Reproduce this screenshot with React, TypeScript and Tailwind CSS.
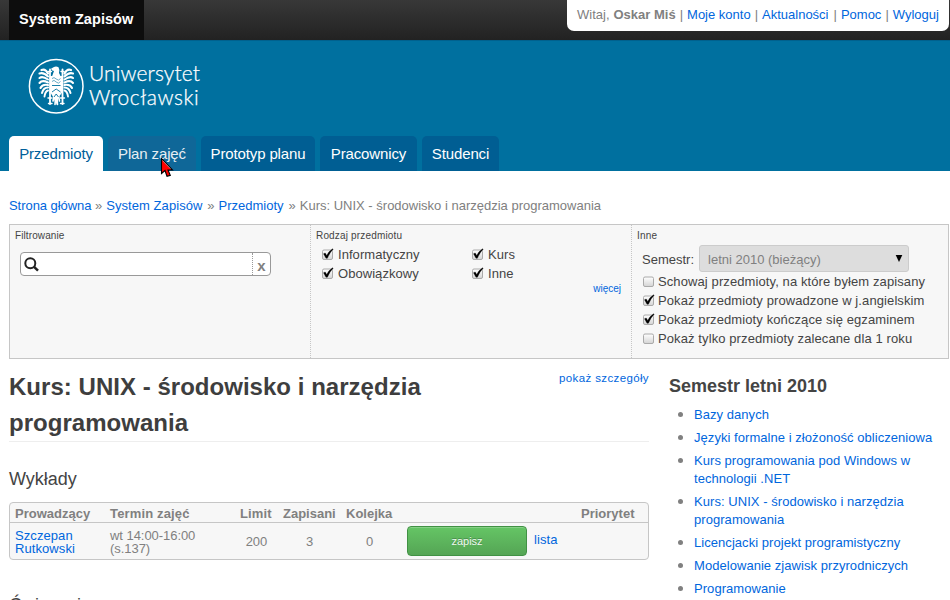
import React from "react";

const link = "text-[#0066dd]";

function Emblem() {
  const wing = (
    <g fill="none" stroke="#fff" strokeLinecap="round">
      <path d="M20 15.500 C18.500 12.500 16 11 13.500 12" strokeWidth="2.200" />
      <path d="M20 18.500 C17 15.500 14 14.500 11.500 15.500" strokeWidth="2.100" />
      <path d="M20 21.500 C17 19.500 13.500 18.500 11.500 20" strokeWidth="2.100" />
      <path d="M20 24.500 C17 23 13.500 22.500 11.500 25" strokeWidth="2.100" />
      <path d="M20 27 C17 26.500 14 26.500 12.500 30" strokeWidth="2.100" />
      <path d="M20 29.500 C17.500 29.500 15 31 14 35" strokeWidth="2" />
      <path d="M20 32.500 C18.500 33 17 34.500 16.500 38.500" strokeWidth="1.900" />
      <path d="M22 11.500 V46" strokeWidth="1.800" />
      <path d="M20.500 13.500 H23.500 M20 40 H24 M20.500 45.500 H24" strokeWidth="1.400" />
      <path d="M26 38 L25 43 M27.500 39 L27 46.500" strokeWidth="1.600" />
    </g>
  );
  return (
    <svg width="56" height="56" viewBox="0 0 56 56" className="shrink-0">
      <circle cx="28.200" cy="28.200" r="26.800" fill="none" stroke="#fff" strokeWidth="1.500" />
      {wing}
      <g transform="translate(56.500 0) scale(-1 1)">{wing}</g>
      <path d="M24.300 12.500 L23 10.800 L25.500 9.300 Q28 7.500 30.500 9.300 Q32 12 31 15 L32.500 18 H24.200 L26 13 Z" fill="#fff" />
      <path d="M22 18 H34.500 V34 L31.500 38 L30 42 L28.200 47 L26.500 42 L24.500 38 L22 34 Z" fill="#fff" />
      <path d="M24 20.500 Q26 18.500 28.200 21 Q30.500 23.500 32.500 20.500 M24 23.500 Q26 21 28.200 24 Q30.500 26.500 32.500 23.500" fill="none" stroke="#00709f" strokeWidth=".6" />
      <path d="M24 27.500 H32.500 M24 34 L28.200 31 L32.500 34 M26 39 L28.200 36 L30.500 39" fill="none" stroke="#00709f" strokeWidth=".9" />
    </svg>
  );
}

function Check({ on = false }: { on?: boolean }) {
  return (
    <svg width="13" height="13" viewBox="0 0 13 13" className="shrink-0">
      <defs>
        <linearGradient id="box" x1="0" y1="0" x2="0" y2="1">
          <stop offset="0" stopColor="#fff" />
          <stop offset="1" stopColor="#d4d4d4" />
        </linearGradient>
      </defs>
      <rect x="1.500" y="2" width="10" height="9.500" rx="1.500" fill="url(#box)" stroke="#aaa" />
      {on && <path d="M2.500 5.800 L4.200 5 L5.700 7.500 Q7.500 3.500 11.500 .8 L12.200 1.300 Q8.700 4.700 6.400 10.200 L5 10.200 Z" fill="#000" stroke="#000" strokeWidth=".3" />}
    </svg>
  );
}

const tabs = [
  { name: "Przedmioty", style: "w-[94px] bg-white text-[#00609a]" },
  { name: "Plan zajęć", style: "w-[88px] bg-[#0f6798] text-[#e7eef3]" },
  { name: "Prototyp planu", style: "w-[114px] bg-[#005e93] text-white" },
  { name: "Pracownicy", style: "w-[97px] bg-[#005e93] text-white" },
  { name: "Studenci", style: "w-[77px] bg-[#005e93] text-white" },
];

const courses = [
  ["Bazy danych"],
  ["Języki formalne i złożoność obliczeniowa"],
  ["Kurs programowania pod Windows w", "technologii .NET"],
  ["Kurs: UNIX - środowisko i narzędzia", "programowania"],
  ["Licencjacki projekt programistyczny"],
  ["Modelowanie zjawisk przyrodniczych"],
  ["Programowanie"],
];

const options = [
  { label: "Schowaj przedmioty, na które byłem zapisany", on: false },
  { label: "Pokaż przedmioty prowadzone w j.angielskim", on: true },
  { label: "Pokaż przedmioty kończące się egzaminem", on: true },
  { label: "Pokaż tylko przedmioty zalecane dla 1 roku", on: false },
];

export default function App() {
  return (
    <div className="relative h-[600px] w-[950px] overflow-hidden whitespace-nowrap bg-white font-['Liberation_Sans',Arial,sans-serif] text-[13px] leading-[18px] text-[#808080]">
      <div className="flex h-10 items-start justify-between bg-linear-to-b from-[#383838] to-[#222] pl-[9px] pr-px">
        <div className="h-10 w-[135px] bg-[#0d0d0d] pl-[10px] text-[14.5px] font-bold leading-[38px] tracking-[0.05px] text-white">System Zapisów</div>
        <div className="flex h-[31px] w-[382px] gap-1 rounded-b-[7px] bg-white pl-[10px] leading-[30px]">
          <span>Witaj,</span><b>Oskar Miś</b><span>|</span>
          <a className={link}>Moje konto</a><span>|</span>
          <a className={link}>Aktualności</a><span className="ml-px">|</span>
          <a className={link}>Pomoc</a><span>|</span>
          <a className={link}>Wyloguj</a>
        </div>
      </div>

      <header className="flex h-[131px] flex-col justify-between border-t border-[#00618e] bg-[#00709f] pl-[9px]">
        <div className="flex pl-[19px] pt-[17px]">
          <Emblem />
          <div className="pl-[5px] pt-[3px] font-[Lato] text-[21px] font-light leading-6 text-white [-webkit-text-stroke:0.25px_white]">
            <div className="tracking-[0.1px]">Uniwersytet</div>
            <div className="tracking-[0.55px]">Wrocławski</div>
          </div>
        </div>
        <nav className="flex gap-[5px]">
          {tabs.map((t) => (
            <a key={t.name} className={"h-[35px] rounded-t-[5px] text-center text-[15px] leading-[36px] tracking-[-0.13px] " + t.style}>{t.name}</a>
          ))}
        </nav>
      </header>

      <div className="flex h-[53px] gap-1 pl-[9px] pt-[26px]">
        <a className={"w-[82px] tracking-[-0.05px] " + link}>Strona główna</a><span>»</span>
        <a className={"w-[97px] tracking-[0.06px] " + link}>System Zapisów</a><span>»</span>
        <a className={link}>Przedmioty</a><span className="ml-px">»</span>
        <span>Kurs: UNIX - środowisko i narzędzia programowania</span>
      </div>

      <section className="ml-[9px] flex h-[135px] w-[940px] border border-[#c6c6c6] bg-[#f7f7f7] text-[#444]">
        <div className="w-[301px] border-r border-dotted border-[#c6c6c6] pl-[5px] pt-[5px]">
          <div className="text-[10px] leading-3 tracking-[0.1px]">Filtrowanie</div>
          <div className="ml-[5px] mt-[10px] flex h-6 w-[251px] rounded-[4px] border border-[#999] bg-white">
            <svg width="22" height="22" viewBox="0 0 22 22">
              <circle cx="9.300" cy="10.200" r="5" fill="none" stroke="#222" strokeWidth="2" />
              <path d="M12.800 13.700 L17 17.700" stroke="#222" strokeWidth="2.500" />
            </svg>
            <div className="ml-[209px] h-[22px] w-[18px] border-l border-dotted border-[#999] text-center text-[15px] font-bold leading-[26px] text-[#808080]">x</div>
          </div>
        </div>
        <div className="w-[321px] border-r border-dotted border-[#c6c6c6] pl-[5px] pt-[5px]">
          <div className="text-[10px] leading-3 tracking-[0.17px]">Rodzaj przedmiotu</div>
          <div className="ml-[5px] mt-[3px] grid w-[300px] grid-cols-2 leading-[19px] tracking-[0.05px]">
            {["Informatyczny", "Kurs", "Obowiązkowy", "Inne"].map((n) => (
              <label key={n} className="flex items-center gap-1"><Check on />{n}</label>
            ))}
          </div>
          <div className="pr-[10px] text-right text-[10px] leading-3"><a className={link}>więcej</a></div>
        </div>
        <div className="pl-[5px] pt-[5px]">
          <div className="text-[10px] leading-3 tracking-[0.2px]">Inne</div>
          <div className="ml-[5px] mt-[3px] flex h-[27px] gap-[5px] leading-7">
            <span className="pt-px">Semestr:</span>
            <div className="flex h-[27px] w-[210px] justify-between rounded-[3px] border border-[#ccc] bg-[#ddd] pl-2 pr-[5px] text-[#808080]">
              <span>letni 2010 (bieżący)</span>
              <svg width="8" height="25" viewBox="0 0 8 25"><path d="M.7 9 H7.300 L4 16 Z" fill="#000" /></svg>
            </div>
          </div>
          <div className="ml-[5px] leading-[19px] tracking-[0.1px]">
            {options.map((o) => (
              <label key={o.label} className="flex items-center gap-[3px]"><Check on={o.on} />{o.label}</label>
            ))}
          </div>
        </div>
      </section>

      <div className="flex pl-[9px]">
        <main className="w-[640px]">
          <div className="flex h-[83px] justify-between border-b border-[#eee] pt-[10px]">
            <h1 className="text-[24px] font-bold leading-9 tracking-[0.03px] text-[#3e3e3e]">Kurs: UNIX - środowisko i narzędzia<br />programowania</h1>
            <a className={"text-[11.5px] leading-[18px] tracking-[0.37px] " + link}>pokaż szczegóły</a>
          </div>
          <h2 className="mt-[25px] text-[18px] leading-6 text-[#444]">Wykłady</h2>
          <div className="mt-[11px] h-[58px] rounded-[4px] border border-[#c6c6c6] bg-[#f7f7f7]">
            <div className="grid h-5 grid-cols-[95px_130px_43px_63px_235px_1fr] border-b border-[#c6c6c6] pl-[5px] font-bold leading-[21px]">
              <span>Prowadzący</span><span className="tracking-[0.15px]">Termin zajęć</span><span className="tracking-[0.15px]">Limit</span><span>Zapisani</span><span>Kolejka</span><span>Priorytet</span>
            </div>
            <div className="flex h-9 items-center pl-[5px] leading-[13px]">
              <a className={"w-[95px] pt-px tracking-[0.08px] " + link}>Szczepan<br />Rutkowski</a>
              <span className="w-[130px] pt-px tracking-[-0.05px]">wt 14:00-16:00<br />(s.137)</span>
              <span className="w-[33px] pt-px text-center">200</span>
              <span className="w-[73px] pt-px text-center">3</span>
              <span className="w-[47px] pt-px text-center">0</span>
              <button className="ml-[14px] h-[30px] w-[120px] rounded-[4px] border border-[#419144] bg-linear-to-b from-[#65c565] to-[#55a555] text-[11px] text-[#eef8ee] shadow-[inset_0_1px_0_#86d086] [text-shadow:0_-1px_0_#4a8f4e]">zapisz</button>
              <a className={"ml-[7px] -mt-[4px] tracking-[0.1px] " + link}>lista</a>
            </div>
          </div>
          <h2 className="mt-[33px] text-[18px] leading-6 text-[#444]">Ćwiczenia</h2>
        </main>
        <aside className="pl-5 pt-[15px]">
          <h2 className="text-[18px] font-bold leading-6 text-[#444]">Semestr letni 2010</h2>
          <ul className="mt-2 flex flex-col gap-[5px] tracking-[0.05px]">
            {courses.map((c) => (
              <li key={c[0]} className="flex">
                <span className="ml-[9px] mr-[11px] mt-[6px] size-[5px] rounded-full bg-[#808080]" />
                <a className={link}>{c.map((l) => <span key={l} className="block">{l}</span>)}</a>
              </li>
            ))}
          </ul>
        </aside>
      </div>

      <svg className="absolute left-[160px] top-[157px]" width="14" height="21" viewBox="0 0 14 21">
        <path d="M1.500 1.500 V16.500 L5 13.500 L7 19.300 L10.300 18.300 L8 13 H12.500 Z" fill="#f00" stroke="#000" strokeWidth="1.100" />
        <path d="M2.500 3.500 L10.500 11.700" stroke="#fff" strokeWidth=".5" />
      </svg>
    </div>
  );
}
